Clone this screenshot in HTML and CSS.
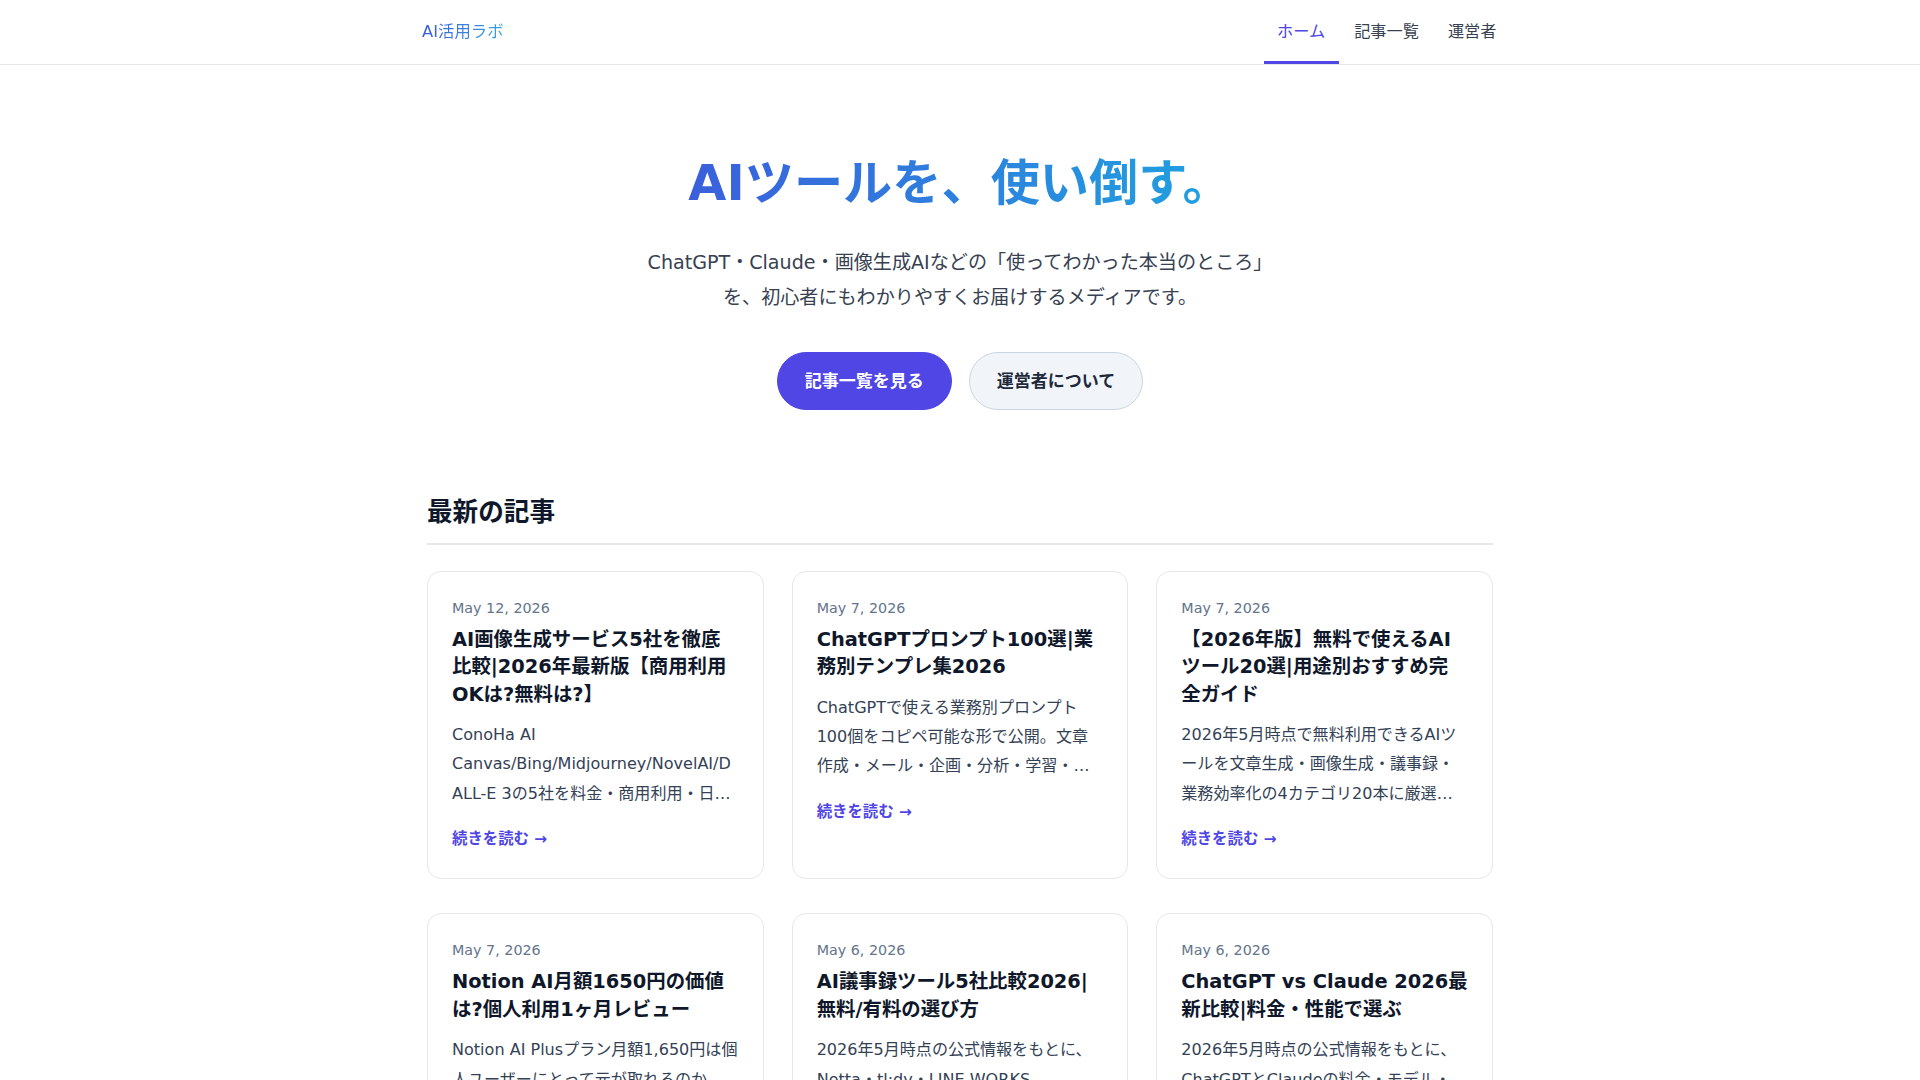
FILE: index.html
```html
<!DOCTYPE html>
<html lang="ja">
<head>
<meta charset="utf-8">
<title>AI活用ラボ</title>
<link rel="stylesheet" href="styles.css">
</head>
<body>
<header class="site-header">
  <div class="header-inner">
    <a class="logo" href="#"><span class="logo-text">AI活用ラボ</span></a>
    <nav class="nav">
      <a class="nav-link active" href="#">ホーム</a>
      <a class="nav-link" href="#">記事一覧</a>
      <a class="nav-link" href="#">運営者</a>
    </nav>
  </div>
</header>

<main>
  <section class="hero">
    <h1 class="hero-title"><span class="grad">AIツールを、使い倒す。</span></h1>
    <p class="hero-sub">ChatGPT・Claude・画像生成AIなどの「使ってわかった本当のところ」<br>を、初心者にもわかりやすくお届けするメディアです。</p>
    <div class="hero-actions">
      <a class="btn btn-primary" href="#">記事一覧を見る</a>
      <a class="btn btn-secondary" href="#">運営者について</a>
    </div>
  </section>

  <section class="latest">
    <h2 class="section-title">最新の記事</h2>
    <div class="grid">
      <article class="card">
        <div class="date">May 12, 2026</div>
        <h3 class="card-title">AI画像生成サービス5社を徹底比較|2026年最新版【商用利用OKは?無料は?】</h3>
        <p class="excerpt">ConoHa AI Canvas/Bing/Midjourney/NovelAI/DALL-E 3の5社を料金・商用利用・日本語対応・画質の観点で徹底比較しました。</p>
        <a class="more" href="#">続きを読む →</a>
      </article>
      <article class="card">
        <div class="date">May 7, 2026</div>
        <h3 class="card-title">ChatGPTプロンプト100選|業務別テンプレ集2026</h3>
        <p class="excerpt">ChatGPTで使える業務別プロンプト100個をコピペ可能な形で公開。文章作成・メール・企画・分析・学習・プログラミングまで網羅しています。</p>
        <a class="more" href="#">続きを読む →</a>
      </article>
      <article class="card">
        <div class="date">May 7, 2026</div>
        <h3 class="card-title">【2026年版】無料で使えるAIツール20選|用途別おすすめ完<br>全ガイド</h3>
        <p class="excerpt">2026年5月時点で無料利用できるAIツールを文章生成・画像生成・議事録・業務効率化の4カテゴリ20本に厳選して紹介します。</p>
        <a class="more" href="#">続きを読む →</a>
      </article>
      <article class="card">
        <div class="date">May 7, 2026</div>
        <h3 class="card-title">Notion AI月額1650円の価値は?個人利用1ヶ月レビュー</h3>
        <p class="excerpt">Notion AI Plusプラン月額1,650円は個人ユーザーにとって元が取れるのか、実際に1ヶ月間毎日使って検証しました。</p>
        <a class="more" href="#">続きを読む →</a>
      </article>
      <article class="card">
        <div class="date">May 6, 2026</div>
        <h3 class="card-title">AI議事録ツール5社比較2026|無料/有料の選び方</h3>
        <p class="excerpt">2026年5月時点の公式情報をもとに、Notta・tl;dv・LINE WORKS AiNote・Otter・Rimo Voiceの5社を比較します。</p>
        <a class="more" href="#">続きを読む →</a>
      </article>
      <article class="card">
        <div class="date">May 6, 2026</div>
        <h3 class="card-title">ChatGPT vs Claude 2026最新比較|料金・性能で選ぶ</h3>
        <p class="excerpt">2026年5月時点の公式情報をもとに、ChatGPTとClaudeの料金・モデル・Web検索・画像生成の違いを比較します。</p>
        <a class="more" href="#">続きを読む →</a>
      </article>
    </div>
  </section>
</main>
</body>
</html>
```

FILE: styles.css
```css
* {
  box-sizing: border-box;
}

html, body {
  margin: 0;
  padding: 0;
  background: #ffffff;
}

body {
  font-family: "DejaVu Sans", "Noto Sans CJK JP", sans-serif;
  color: #1f2937;
}

a {
  text-decoration: none;
  color: inherit;
}

/* Header */
.site-header {
  height: 65px;
  border-bottom: 1px solid #e5e7eb;
  background: #ffffff;
}

.header-inner {
  max-width: 1100px;
  height: 64px;
  margin: 0 auto;
  display: flex;
  justify-content: space-between;
  align-items: stretch;
}

.logo {
  display: flex;
  align-items: center;
  padding: 0 12px 4px;
  font-size: 16.4px;
}

.logo-text {
  display: inline-block;
  background: linear-gradient(90deg, #3b5bdb, #3aa3e0);
  -webkit-background-clip: text;
  background-clip: text;
  color: transparent;
}

.nav {
  display: flex;
  gap: 2px;
}

.nav-link {
  display: flex;
  align-items: center;
  padding: 0 13.5px 2px;
  font-size: 16.2px;
  color: #374151;
  border-bottom: 3px solid transparent;
}

.nav-link.active {
  color: #4f46e5;
  border-bottom-color: #4f46e5;
}

/* Hero */
.hero {
  max-width: 1066px;
  margin: 0 auto;
  padding: 89px 0 83px;
  text-align: center;
}

.hero-title {
  margin: 0;
  font-size: 49.2px;
  line-height: 1.2;
  font-weight: 700;
}

.grad {
  display: inline-block;
  background: linear-gradient(90deg, #3b5fdc, #1fa3df);
  -webkit-background-clip: text;
  background-clip: text;
  color: transparent;
}

.hero-sub {
  margin: 33px 0 0;
  font-size: 19.1px;
  line-height: 34.5px;
  color: #374151;
}

.hero-actions {
  margin-top: 37px;
  display: flex;
  justify-content: center;
  gap: 17px;
}

.btn {
  display: inline-block;
  padding: 15px 27px;
  font-size: 17px;
  line-height: 26px;
  font-weight: 700;
  border-radius: 999px;
}

.btn-primary {
  background: #4f46e5;
  color: #ffffff;
  border: 1px solid #4f46e5;
}

.btn-secondary {
  background: #f1f5f9;
  color: #1e293b;
  border: 1px solid #cbd5e1;
}

/* Latest */
.latest {
  max-width: 1066px;
  margin: 0 auto;
}

.section-title {
  margin: 0;
  padding: 2px 0 12px;
  font-size: 25.6px;
  line-height: 1.4;
  font-weight: 700;
  color: #0f172a;
  border-bottom: 2px solid #e5e7eb;
}

.grid {
  margin-top: 26px;
  display: grid;
  grid-template-columns: repeat(3, 1fr);
  gap: 34px 28px;
}

.card {
  border: 1px solid #e5e7eb;
  border-radius: 14px;
  padding: 24px;
  background: #ffffff;
}

.date {
  font-size: 14.3px;
  line-height: 24px;
  color: #64748b;
}

.card-title {
  margin: 6px 0 0;
  font-size: 19.4px;
  line-height: 27.4px;
  font-weight: 700;
  color: #0f172a;
}

.excerpt {
  margin: 12px 0 0;
  font-size: 16.06px;
  line-height: 29.4px;
  color: #334155;
  overflow-wrap: anywhere;
  display: -webkit-box;
  -webkit-line-clamp: 3;
  -webkit-box-orient: vertical;
  overflow: hidden;
}

.more {
  display: inline-block;
  margin-top: 17px;
  font-size: 15.4px;
  line-height: 29px;
  font-weight: 600;
  color: #4f46e5;
}
```
